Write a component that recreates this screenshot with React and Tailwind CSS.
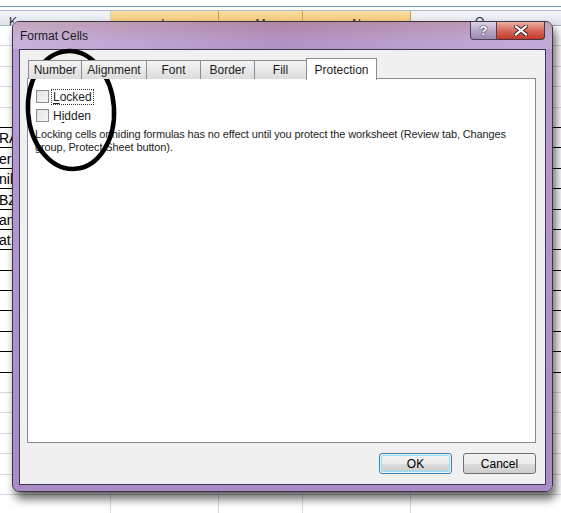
import React from "react";

const ROWS = 24;
const leftText = { 5: "RA", 6: "er", 7: "nil", 8: "BZ", 9: "am", 10: "at" };

function SheetRow({ i }) {
  const dark = i >= 4 && i <= 16;
  const side = dark ? "border-b border-b-black" : "border-b border-b-[#d4dae4]";
  return (
    <div className="flex h-[20.4px] shrink-0">
      <div className={`w-[111px] shrink-0 border-r border-r-[#d4dae4] overflow-hidden flex items-end pb-[1px] text-[14px] leading-[16px] text-black ${side}`}>
        {leftText[i] && <span className="ml-[-1px]">{leftText[i]}</span>}
      </div>
      <div className="w-[108px] shrink-0 border-r border-[#d4dae4] border-b" />
      <div className="w-[84px] shrink-0 border-r border-[#d4dae4] border-b" />
      <div className="w-[108px] shrink-0 border-r border-[#d4dae4] border-b" />
      <div className={`flex-1 ${side}`} />
    </div>
  );
}

function Checkbox() {
  return (
    <div className="w-[13px] h-[13px] shrink-0 border border-[#8e8f8f] bg-[linear-gradient(135deg,#d8d8d8,#fafafa)] p-px">
      <div className="w-full h-full border border-[#eeeeee] bg-[linear-gradient(135deg,#e4e4e4,#f6f6f6)]" />
    </div>
  );
}

function Tab({ label, w }) {
  return (
    <div
      className={`${w} h-[19px] mt-[2px] shrink-0 border border-[#898c95] border-r-0 border-b-0 last:border-r bg-[linear-gradient(180deg,#f4f4f4,#e8e8e8_50%,#dcdcdc)] flex items-center justify-center text-[12px] text-[#1e1e1e]`}
    >
      {label}
    </div>
  );
}

export default function App() {
  return (
    <div className="relative w-[561px] h-[513px] overflow-hidden bg-white font-['Liberation_Sans',Arial,sans-serif]">
      {/* worksheet behind the dialog */}
      <div className="flex flex-col">
        <div className="h-[6px]" />
        <div className="h-px bg-[#6f96c4]" />
        <div className="h-[3px] bg-white" />
        <div className="h-px bg-[#a9bdd4]" />
        <div className="flex h-[14px] text-[12px] leading-[14px] text-[#27303d] overflow-hidden">
          <div className="w-[111px] shrink-0 border-r border-[#c5cfdc] bg-[linear-gradient(180deg,#f3f5f8,#dfe4ea)] pl-[9px] pt-[4px]">K</div>
          <div className="w-[108px] shrink-0 border-r border-[#e09a3a] bg-[linear-gradient(180deg,#f9dfa6,#f0c067)] text-center pt-[6px]">L</div>
          <div className="w-[84px] shrink-0 border-r border-[#e09a3a] bg-[linear-gradient(180deg,#f9dfa6,#f0c067)] text-center pt-[6px]">M</div>
          <div className="w-[108px] shrink-0 border-r border-[#e09a3a] bg-[linear-gradient(180deg,#f9dfa6,#f0c067)] text-center pt-[6px]">N</div>
          <div className="flex-1 bg-[linear-gradient(180deg,#f3f5f8,#dfe4ea)] pl-[64px] pt-[4px]">O</div>
        </div>
        <div className="h-px bg-[#9eb0c6]" />
        {Array.from({ length: ROWS }, (_, i) => (
          <SheetRow key={i} i={i} />
        ))}
      </div>

      {/* Format Cells dialog */}
      <div className="absolute left-[12px] top-[21px] w-[541px] h-[471px] rounded-[7px] border border-[#3a3444] bg-[linear-gradient(180deg,#b38ba5_0%,#b79bd0_4%,#b597cd_30%,#a98cc6_100%)] shadow-[3px_7px_10px_rgba(0,0,0,0.6)] flex flex-col px-[6px] pb-[6px]">
        <div className="h-[27px] shrink-0 flex items-center -mx-[6px] px-[7px] text-[12px] text-[#1b1b1b] bg-[linear-gradient(90deg,rgba(230,220,240,0.35),rgba(150,100,130,0.15)_50%,rgba(230,220,240,0.25))]">
          Format Cells
        </div>

        {/* caption buttons */}
        <div className="absolute top-0 right-[7px] flex h-[18px]">
          <div className="w-[27px] h-full border border-[#4d4258] border-t-0 rounded-bl-[4px] bg-[linear-gradient(180deg,#ddd4e6,#b9a8c9_50%,#a08bb4)] flex items-center justify-center text-[13px] font-bold text-white [text-shadow:0_0_2px_#333,0_0_1px_#333]">?</div>
          <div className="w-[48px] h-full border border-[#4d3338] border-t-0 border-l-0 rounded-br-[4px] bg-[linear-gradient(180deg,#eab1a6,#d7685a_50%,#c3392c)] flex items-center justify-center">
            <svg width="14" height="11" viewBox="0 0 14 11">
              <path d="M2 1.5 L12 9.5 M12 1.5 L2 9.5" stroke="#3b2020" strokeWidth="4" strokeLinecap="square" />
              <path d="M2 1.5 L12 9.5 M12 1.5 L2 9.5" stroke="#ffffff" strokeWidth="2.2" strokeLinecap="square" />
            </svg>
          </div>
        </div>

        <div className="flex-1 border border-[#3e3750] bg-[#f0f0f0] flex flex-col pl-[7px] pt-[8px]">
          {/* tabs */}
          <div className="flex h-[21px] pl-px relative z-10">
            <Tab label="Number" w="w-[53px]" />
            <Tab label="Alignment" w="w-[65px]" />
            <Tab label="Font" w="w-[54px]" />
            <Tab label="Border" w="w-[54px]" />
            <Tab label="Fill" w="w-[52px]" />
            <div className="w-[71px] h-[22px] shrink-0 border border-[#898c95] border-b-0 bg-white flex items-center justify-center text-[12px] text-[#1e1e1e]">
              Protection
            </div>
          </div>

          {/* panel */}
          <div className="w-[509px] h-[365px] mt-[-1px] border border-[#898c95] bg-white flex flex-col pl-[7px] pt-[9px] text-[12px] text-[#1e1e1e]">
            <div className="flex items-center h-[17px]">
              <div className="ml-px"><Checkbox /></div>
              <span className="ml-[2px] px-px border border-dotted border-[#333] leading-[14px]">
                <span className="underline underline-offset-2 decoration-1">L</span>ocked
              </span>
            </div>
            <div className="flex items-center h-[17px] mt-[2px]">
              <div className="ml-px"><Checkbox /></div>
              <span className="ml-[4px] leading-[14px]">
                H<span className="underline underline-offset-2 decoration-1">i</span>dden
              </span>
            </div>
            <p className="mt-[4px] text-[11px] leading-[13px] tracking-[-0.12px]">
              Locking cells or hiding formulas has no effect until you protect the worksheet (Review tab, Changes
              <br />
              group, Protect Sheet button).
            </p>
          </div>

          {/* buttons */}
          <div className="flex justify-end gap-[11px] w-[509px] mt-[10px]">
            <div className="w-[73px] h-[21px] rounded-[3px] border border-[#3c7fb1] p-px">
              <div className="w-full h-full rounded-[2px] border border-[#8ee0fb] bg-[linear-gradient(180deg,#f2f2f2,#ebebeb_50%,#dddddd_51%,#cfcfcf)] flex items-center justify-center text-[12px] text-black">
                OK
              </div>
            </div>
            <div className="w-[73px] h-[21px] rounded-[3px] border border-[#707070] bg-[linear-gradient(180deg,#f2f2f2,#ebebeb_50%,#dddddd_51%,#cfcfcf)] flex items-center justify-center text-[12px] text-black">
              Cancel
            </div>
          </div>
        </div>
      </div>

      {/* hand-drawn circle */}
      <svg className="absolute inset-0 pointer-events-none" width="561" height="513">
        <ellipse cx="71" cy="110" rx="43" ry="59" fill="none" stroke="#000" strokeWidth="4.5" transform="rotate(-4 71 110)" />
      </svg>
    </div>
  );
}
